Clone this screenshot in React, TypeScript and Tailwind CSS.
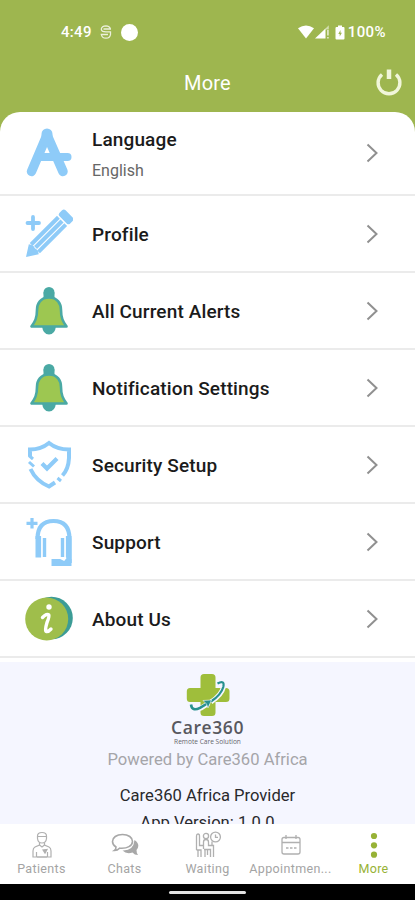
import React from 'react';

interface IconProps {
  className?: string;
}

const LanguageIcon = ({ className }: IconProps) => (
  <svg viewBox="0 0 48 52" className={className} fill="none" stroke="#8ecbf8" strokeWidth="9.500" strokeLinecap="round" strokeLinejoin="round">
    <path d="M6.500 44.500 L22 8 L38 44.500" />
    <path d="M22 7 V14" strokeWidth="11" />
    <path d="M16 30 H42.500" strokeWidth="8" />
  </svg>
);

const PencilIcon = ({ className }: IconProps) => (
  <svg viewBox="0 0 48 52" className={className}>
    <path d="M8 9 V21 M2.500 15 H14" stroke="#8ecbf8" strokeWidth="3.800" strokeLinecap="round" />
    <g transform="translate(1 49) rotate(-45)" fill="#8ecbf8">
      <path d="M0 0 L11 -7 Q14 -3.500 12.500 0 Q14 3.500 11 7 Z" />
      <rect x="12.500" y="-7.200" width="38.500" height="4" />
      <rect x="13.500" y="-2.100" width="37.500" height="4.200" />
      <rect x="12.500" y="3.200" width="38.500" height="4" />
      <rect x="52.500" y="-7.500" width="8.500" height="15" rx="2.500" />
    </g>
  </svg>
);

const BellIcon = ({ className }: IconProps) => (
  <svg viewBox="0 0 48 52" className={className}>
    <circle cx="24" cy="7.500" r="5.500" fill="#4aa9a4" />
    <rect x="18.500" y="7.500" width="11" height="8" fill="#4aa9a4" />
    <path d="M17 41 H31 Q30 49.500 24 49.500 Q18 49.500 17 41 Z" fill="#4aa9a4" />
    <path
      d="M24 12.500 C15.500 12.500 12 18.500 12 25 C12 34 9.500 37 6.500 41.500 H41.500 C38.500 37 36 34 36 25 C36 18.500 32.500 12.500 24 12.500 Z"
      fill="#9dc751"
      stroke="#4aa9a4"
      strokeWidth="2.600"
      strokeLinejoin="round"
    />
  </svg>
);

const ShieldIcon = ({ className }: IconProps) => (
  <svg viewBox="0 0 48 52" className={className} fill="none" stroke="#8ecbf8" strokeWidth="4">
    <path d="M5 17.500 V10.500 Q16 10.500 24 4 Q32 10.500 44 10.500 V19 Q43.500 30 37.500 36.500" />
    <path d="M5.500 30 Q11 42 24 47.500 L30 43.500" />
    <path d="M4 16.500 L8 20 M4 23 L9 27.500 M32.500 39 L36 42" strokeWidth="3" />
    <path d="M17 24.500 L22 29.500 L32 19.500" strokeWidth="4.200" />
  </svg>
);

const SupportIcon = ({ className }: IconProps) => (
  <svg viewBox="0 0 48 52" className={className} fill="none" stroke="#8ecbf8">
    <path d="M7 2 V12.500 M1.500 7.300 H12.500" strokeWidth="3.200" />
    <path d="M12.500 23 Q12.500 5 28.500 5 Q44.500 5 44.500 23 V47" strokeWidth="4.200" />
    <path d="M13.300 20 V41.500 M43.700 20 V47" strokeWidth="5.600" />
    <path d="M19.500 22 V41 M37.500 22 V41" strokeWidth="3.400" />
    <path d="M26.500 46.500 H46.500" strokeWidth="7" />
    <path d="M35 42 L39 44 L41 41.500" stroke="#fff" strokeWidth="1.500" />
  </svg>
);

const InfoIcon = ({ className }: IconProps) => (
  <svg viewBox="0 0 48 52" className={className}>
    <circle cx="26.500" cy="25" r="21.300" fill="#3c9c96" />
    <circle cx="21.700" cy="26" r="21.500" fill="#9fbe4b" />
    <circle cx="24" cy="14" r="2.700" fill="#fff" />
    <path d="M17.500 24.500 Q22 20 23.800 22 Q24.500 23.500 22 29.500 Q19.500 38 21.500 38.500 Q23.500 38.800 26 36" fill="none" stroke="#fff" strokeWidth="3.400" strokeLinecap="round" />
  </svg>
);

const PatientsIcon = ({ className }: IconProps) => (
  <svg viewBox="0 0 28 28" className={className} fill="none" stroke="#b0b0b0" strokeWidth="1.200">
    <path d="M9.500 5 Q9.500 1.500 14 1.500 Q18.500 1.500 18.500 5 V7.500 Q18 12 14 12 Q10 12 9.500 7.500 Z M9.500 5.500 H18.500" />
    <path d="M11.500 11.500 V14 L7 16 Q5 17 5 20 V26 H23 V20 Q23 17 21 16 L16.500 14 V11.500" />
    <path d="M8.500 26 V21 M19.500 26 V21 M9 26 H19 M11.500 14 L14 16 L16.500 14" />
    <path d="M15 19 L17 22 L19 18.500 Z" fill="#b0b0b0" />
  </svg>
);

const ChatsIcon = ({ className }: IconProps) => (
  <svg viewBox="0 0 28 28" className={className}>
    <path d="M23.500 9 Q30 13.500 25.500 19 Q25.500 22.500 27 24 Q23.500 24 21.500 21.500 Q15.500 23.500 11.500 19.500 Q22.500 20 23.500 9 Z" fill="#a8a8a8" />
    <path d="M11.500 3.500 C5.500 3.500 1.500 6.500 1.500 10.500 C1.500 13 3 14.800 5 16 Q5 18.500 3.500 19.500 Q6.500 19.500 8.500 17.200 C16.500 18 21.500 14.500 21.500 10.500 C21.500 6.500 17.500 3.500 11.500 3.500 Z" fill="#fff" stroke="#a8a8a8" strokeWidth="1.600" />
  </svg>
);

const WaitingIcon = ({ className }: IconProps) => (
  <svg viewBox="0 0 28 28" className={className} fill="none" stroke="#b0b0b0" strokeWidth="1.300">
    <circle cx="21.500" cy="6" r="4.900" />
    <path d="M21.500 3.500 V6.300 H24" />
    <circle cx="12" cy="5" r="2.600" />
    <path d="M2.500 19 V5 Q2.500 3 4 3 Q5.500 3 5.500 5 V14.500 H9 M2.500 19 H7 V26 M4 19 V26" />
    <path d="M9.500 18 V11 Q9.500 8.500 12 8.500 Q14.500 8.500 14.500 11 V14.500 H18 V10.500 M14.500 14.500 H19.500 V26 M16.500 26 V18.500 H10 M11 19 V26 M13.500 19 V24" />
  </svg>
);

const AppointmentsIcon = ({ className }: IconProps) => (
  <svg viewBox="0 0 28 28" className={className} fill="none" stroke="#b0b0b0" strokeWidth="1.300">
    <rect x="5" y="6.500" width="18" height="16.500" rx="2" />
    <path d="M5 11.500 H23 M9 4 V8 M19 4 V8" />
    <path d="M9 17 H19.500" strokeWidth="1.500" strokeDasharray="2.500 1.500" />
  </svg>
);

const MoreIcon = ({ className }: IconProps) => (
  <svg viewBox="0 0 28 28" className={className} fill="#97b236">
    <circle cx="14" cy="5" r="3.100" />
    <circle cx="14" cy="14.300" r="3.100" />
    <circle cx="14" cy="23.700" r="3.100" />
  </svg>
);

const CareLogo = () => (
  <svg viewBox="0 0 44 44" className="h-[44px] w-[44px] shrink-0">
    <path d="M18 1 H26 Q29.500 1 29.500 4.500 V15 H40 Q43.500 15 43.500 18.500 V25.500 Q43.500 29 40 29 H29.500 V39.500 Q29.500 43 26 43 H18 Q14.500 43 14.500 39.500 V29 H4 Q0.800 29 0.800 25.500 V18.500 Q0.800 15 4 15 H14.500 V4.500 Q14.500 1 18 1 Z" fill="#9fbe3b" />
    <path d="M31 10.500 Q39 6 37.500 14 Q35.500 22 25 29 M4.500 31 Q6 39 15 35 L23 30" fill="none" stroke="#f5f6ff" strokeWidth="5" />
    <path d="M31.500 10.500 Q39 6.500 37.300 14 Q35 22 25 28.500" fill="none" stroke="#28918f" strokeWidth="2.200" />
    <path d="M5 31.500 Q6 39 14 34.800 L22 30" fill="none" stroke="#28918f" strokeWidth="2.600" />
    <path d="M17 27.500 L25.500 27 L22 35 L20.500 31 Z" fill="#28918f" stroke="#f5f6ff" strokeWidth="0.600" />
  </svg>
);

const menuItems = [
  { label: 'Language', value: 'English', Icon: LanguageIcon, height: 'h-[84px]' },
  { label: 'Profile', Icon: PencilIcon, height: 'h-[77px]' },
  { label: 'All Current Alerts', Icon: BellIcon, height: 'h-[77px]' },
  { label: 'Notification Settings', Icon: BellIcon, height: 'h-[77px]' },
  { label: 'Security Setup', Icon: ShieldIcon, height: 'h-[77px]' },
  { label: 'Support', Icon: SupportIcon, height: 'h-[77px]' },
  { label: 'About Us', Icon: InfoIcon, height: 'h-[77px]' },
];

const tabs = [
  { label: 'Patients', Icon: PatientsIcon },
  { label: 'Chats', Icon: ChatsIcon },
  { label: 'Waiting', Icon: WaitingIcon },
  { label: 'Appointmen...', Icon: AppointmentsIcon },
  { label: 'More', Icon: MoreIcon, active: true },
];

const StatusBar = () => (
  <div className="flex h-[54px] items-end justify-between pr-[29px] pb-[12px] pl-[61px] text-white">
    <div className="flex h-5 items-center">
      <span className="w-[31px] text-[15px] font-medium tracking-[0.3px]">4:49</span>
      <svg viewBox="0 0 12 14" className="ml-[8px] h-[14px] w-[12px]" fill="none" stroke="#fff" strokeOpacity="0.8" strokeWidth="1.300">
        <path d="M10.500 4 Q9.500 0.800 6 0.800 Q1.800 1 1.300 4 Q1.300 6.900 6 6.900 H10.500 V9.500 Q10 13.200 6 13.200 Q2 13.200 1.300 9.500 H8 M3.500 4 H11" />
      </svg>
      <span className="ml-[9px] h-[17px] w-[17px] rounded-full bg-white" />
    </div>
    <div className="flex h-5 items-center">
      <svg viewBox="0 0 16 14" className="h-[14px] w-[16px]" fill="#fff">
        <path d="M0 3.300 Q8 -2.500 16 3.300 L8 13.500 Z" />
      </svg>
      <svg viewBox="0 0 15 14" className="ml-[1px] h-[14px] w-[15px]" fill="#fff">
        <path d="M0 13.500 L10.500 3.500 V13.500 Z" />
        <path d="M9 5 L13.800 0.300 V4.500 H10 Z" fillOpacity="0.55" />
        <path d="M12 5 H13.800 V10.500 H12 Z M12 12 H13.800 V13.500 H12 Z" fillOpacity="0.65" />
      </svg>
      <svg viewBox="0 0 10 15" className="ml-[5px] h-[15px] w-[10px]">
        <path d="M3 0.500 H7 V2 H8.500 Q9.500 2 9.500 3 V13.500 Q9.500 14.500 8.500 14.500 H1.500 Q0.500 14.500 0.500 13.500 V3 Q0.500 2 1.500 2 H3 Z" fill="#fff" />
        <path d="M5.500 5 L3.300 9 H4.700 V11.500 L6.900 7.800 H5.500 Z" fill="#9eb64f" />
      </svg>
      <span className="ml-[3px] text-[15px] font-medium tracking-[0.4px]">100%</span>
    </div>
  </div>
);

const App: React.FC = () => (
  <div className="flex h-[900px] w-[415px] flex-col overflow-hidden bg-[#9eb64f] font-[Roboto,sans-serif]">
    <StatusBar />
    <header className="grid h-[58px] shrink-0 grid-cols-[1fr_auto_1fr] items-center text-white">
      <h1 className="col-start-2 text-[20px] leading-6 tracking-[0.2px]">More</h1>
      <button type="button" aria-label="Log out" className="mr-[13px] justify-self-end pb-[2px]">
        <svg viewBox="0 0 26 28" className="h-[28px] w-[26px]" fill="none" stroke="#f1f6da" strokeWidth="3.400">
          <path d="M6 6.500 A10.900 10.900 0 1 0 20 6.500" />
          <path d="M13 1.500 V11" strokeWidth="4.500" />
        </svg>
      </button>
    </header>

    <main className="flex min-h-0 flex-1 flex-col overflow-hidden rounded-t-[20px] bg-white">
      <ul className="shrink-0">
        {menuItems.map(({ label, value, Icon, height }) => (
          <li key={label} className={`${height} flex items-center border-b-2 border-[#ebebeb] pr-[36px] pl-[25px]`}>
            <Icon className="h-[52px] w-[48px] shrink-0" />
            <div className={`ml-[19px] flex-1 ${value ? 'pt-[5px]' : 'pt-[2px]'}`}>
              <div className="text-[19px] leading-6 font-medium tracking-[0.14px] text-[#1b1b1b]">{label}</div>
              {value && <div className="mt-[7px] text-[16px] leading-6 text-[#666]">{value}</div>}
            </div>
            <svg viewBox="0 0 14 20" className="h-[20px] w-[14px]" fill="none" stroke="#909090" strokeWidth="2">
              <path d="M2.500 1.500 L11.500 10 L2.500 18.500" />
            </svg>
          </li>
        ))}
      </ul>

      <section className="mt-[4px] flex min-h-0 flex-1 flex-col items-center overflow-hidden bg-[#f5f6ff] pt-[11px] text-center">
        <CareLogo />
        <div className="mt-px h-[18px] shrink-0 font-['Open_Sans',sans-serif] text-[17.500px] leading-[18px] font-semibold tracking-[0.6px] text-[#58585e]">Care360</div>
        <div className="mt-[2px] h-[7px] shrink-0 font-['Open_Sans',sans-serif] text-[6.600px] leading-[7px] text-[#66666c]">Remote Care Solution</div>
        <p className="mt-[3px] shrink-0 text-[16.600px] leading-[24px] text-[#a5a5a9]">Powered by Care360 Africa</p>
        <p className="mt-[12px] shrink-0 text-[16.600px] leading-[24px] text-[#29292c]">Care360 Africa Provider</p>
        <p className="mt-[3px] shrink-0 text-[16.600px] leading-[24px] text-[#29292c]">App Version: 1.0.0</p>
      </section>
    </main>

    <nav className="flex h-[60px] shrink-0 bg-white">
      {tabs.map(({ label, Icon, active }) => (
        <div key={label} className="flex w-1/5 flex-col items-center pt-[7px]">
          <Icon className="h-[28px] w-[28px]" />
          <span className={`mt-px text-[12.500px] leading-[18px] tracking-[0.35px] whitespace-nowrap ${active ? 'text-[#97b236]' : 'text-[#a4a4a4]'}`}>{label}</span>
        </div>
      ))}
    </nav>
    <div className="flex h-[16px] shrink-0 justify-center bg-black pt-[7px]">
      <span className="h-[3px] w-[77px] rounded-full bg-[#e2e2e2]" />
    </div>
  </div>
);

export default App;
